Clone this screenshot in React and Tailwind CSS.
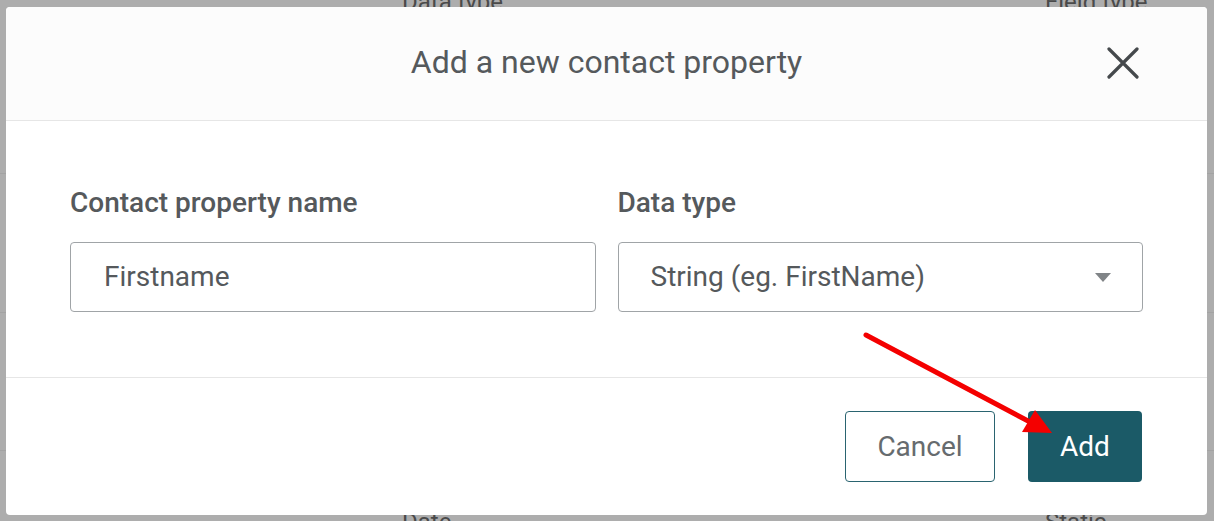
import React from "react";

export default function App() {
  const font = { fontFamily: "Roboto, 'Liberation Sans', sans-serif" };
  return (
    <div className="relative w-[1214px] h-[521px] overflow-hidden bg-[#adadad]" style={font}>
      {/* page behind overlay */}
      <div className="absolute inset-0">
        <div className="absolute left-0 right-0 top-[173px] border-t border-[#a3a3a3]" />
        <div className="absolute left-0 right-0 top-[312px] border-t border-[#a3a3a3]" />
        <div className="absolute left-0 right-0 top-[450px] border-t border-[#a3a3a3]" />
        <div className="absolute left-[402px] top-[-16px] text-[24px] text-[#4a4a4a]">Data type</div>
        <div className="absolute left-[1045px] top-[-16px] text-[24px] text-[#4a4a4a]">Field type</div>
        <div className="absolute left-[402px] top-[504px] text-[24px] text-[#4a4a4a]">Date</div>
        <div className="absolute left-[1045px] top-[504px] text-[24px] text-[#4a4a4a]">Static</div>
      </div>

      {/* modal */}
      <div className="absolute left-[6px] top-[7px] w-[1201px] h-[508px] bg-white rounded-[4px] flex flex-col overflow-hidden">
        <div className="relative h-[114px] shrink-0 bg-[#fcfcfc] border-b border-[#e6e6e6] flex items-center justify-center pb-[4px]">
          <h2 className="text-[32px] text-[#55595c] font-normal leading-none">Add a new contact property</h2>
          <button className="absolute right-[68px] top-[40px] w-[32px] h-[32px] flex items-center justify-center">
            <svg width="32" height="32" viewBox="0 0 32 32">
              <path d="M2 2 L30 30 M30 2 L2 30" stroke="#45494c" strokeWidth="3.2" strokeLinecap="round" />
            </svg>
          </button>
        </div>

        <div className="shrink-0 h-[257px] px-[64px] pt-[65px] grid grid-cols-2 gap-x-[22px] border-b border-[#e6e6e6]">
          <div className="flex flex-col">
            <label className="text-[28px] leading-[34px] font-medium text-[#55595c]">Contact property name</label>
            <div className="mt-[22px] h-[70px] border border-[#a0a4a7] rounded-[4px] flex items-center pl-[33px] text-[28px] text-[#55595c]">
              Firstname
            </div>
          </div>
          <div className="flex flex-col">
            <label className="text-[28px] leading-[34px] font-medium text-[#55595c]">Data type</label>
            <div className="mt-[22px] h-[70px] border border-[#a0a4a7] rounded-[4px] flex items-center justify-between pl-[32px] pr-[31px] text-[28px] text-[#55595c]">
              <span>String (eg. FirstName)</span>
              <svg width="16" height="9" viewBox="0 0 16 9">
                <path d="M0 0 H16 L8 9 Z" fill="#808487" />
              </svg>
            </div>
          </div>
        </div>

        <div className="flex-1 flex items-center justify-end gap-[33px] pr-[65px]">
          <button className="w-[150px] h-[71px] border border-[#2a6470] rounded-[4px] bg-white text-[28px] text-[#666b6e]">
            Cancel
          </button>
          <button className="w-[114px] h-[71px] rounded-[4px] bg-[#1b5a67] text-[28px] text-white">
            Add
          </button>
        </div>
      </div>

      {/* red arrow annotation */}
      <svg className="absolute left-0 top-0 pointer-events-none" width="1214" height="521" viewBox="0 0 1214 521">
        <line x1="866" y1="335" x2="1030" y2="422" stroke="#f40000" strokeWidth="5" strokeLinecap="round" />
        <polygon points="1052,433 1022,432 1035,410" fill="#f40000" />
      </svg>
    </div>
  );
}
